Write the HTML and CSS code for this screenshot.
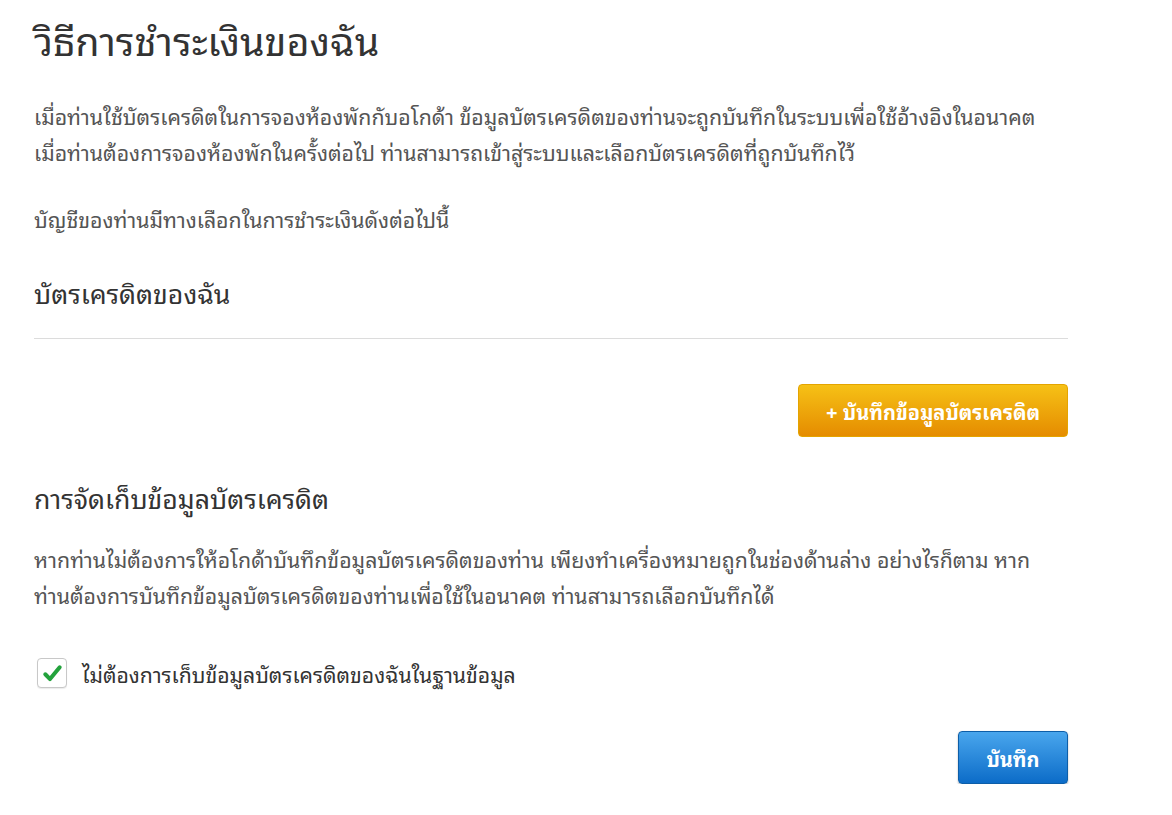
FILE: index.html
```html
<!DOCTYPE html>
<html lang="th">
<head>
<meta charset="utf-8">
<link rel="stylesheet" href="styles.css">
</head>
<body>
<div class="page">
  <h1 class="title">วิธีการชำระเงินของฉัน</h1>
  <p class="text">เมื่อท่านใช้บัตรเครดิตในการจองห้องพักกับอโกด้า ข้อมูลบัตรเครดิตของท่านจะถูกบันทึกในระบบเพื่อใช้อ้างอิงในอนาคต<br>เมื่อท่านต้องการจองห้องพักในครั้งต่อไป ท่านสามารถเข้าสู่ระบบและเลือกบัตรเครดิตที่ถูกบันทึกไว้</p>
  <p class="text options">บัญชีของท่านมีทางเลือกในการชำระเงินดังต่อไปนี้</p>
  <h2 class="subtitle">บัตรเครดิตของฉัน</h2>
  <div class="divider"></div>
  <div class="actions add">
    <button class="btn btn-orange">+ บันทึกข้อมูลบัตรเครดิต</button>
  </div>
  <h2 class="subtitle storage">การจัดเก็บข้อมูลบัตรเครดิต</h2>
  <p class="text">หากท่านไม่ต้องการให้อโกด้าบันทึกข้อมูลบัตรเครดิตของท่าน เพียงทำเครื่องหมายถูกในช่องด้านล่าง อย่างไรก็ตาม หาก<br>ท่านต้องการบันทึกข้อมูลบัตรเครดิตของท่านเพื่อใช้ในอนาคต ท่านสามารถเลือกบันทึกได้</p>
  <label class="check">
    <span class="box"><svg viewBox="0 0 24 24" width="23" height="23"><path d="M4.5 12.8l4.9 5L19.5 5.5" fill="none" stroke="#23a23c" stroke-width="4.2" stroke-linecap="round" stroke-linejoin="round"/></svg></span>
    <span class="check-label">ไม่ต้องการเก็บข้อมูลบัตรเครดิตของฉันในฐานข้อมูล</span>
  </label>
  <div class="actions save">
    <button class="btn btn-blue">บันทึก</button>
  </div>
</div>
</body>
</html>
```
FILE: styles.css
```css
html, body { margin: 0; padding: 0; background: #fff; }
body { font-family: "Noto Sans Thai Looped", "Noto Sans", sans-serif; color: #333; }
.page { width: 1034px; padding: 0 0 0 34px; }
.title { font-size: 39.5px; font-weight: normal; margin: 0; padding-top: 19px; line-height: 40px; color: #333; }
.text { font-size: 21.3px; color: #555; line-height: 36px; margin: 0; }
.title + .text { margin-top: 38px; }
.options { margin-top: 31px; }
.subtitle { font-size: 26.6px; font-weight: normal; color: #333; margin: 0; margin-top: 41px; line-height: 30px; }
.divider { height: 1px; background: #dcdcdc; margin-top: 31px; }
.actions { display: flex; justify-content: flex-end; }
.add { margin-top: 45px; }
.btn { border: 0; border-radius: 4px; color: #fff; font-family: inherit; font-size: 20px; font-weight: bold; height: 53px; padding: 0; line-height: 1; }
.btn-orange { background: linear-gradient(#f6c116, #e58c00); border: 1px solid #e4a400; width: 270px; }
.btn-blue { background: linear-gradient(#49a6ed, #0c6cc8); border: 1px solid #0d5ea8; width: 110px; box-shadow: 0 1px 2px rgba(0,0,0,0.3); }
.storage { margin-top: 45px; }
.storage + .text { margin-top: 28px; }
.check { display: flex; align-items: center; gap: 15px; margin-top: 45px; margin-left: 3px; }
.box { width: 28px; height: 28px; border: 1px solid #c8c8c8; border-radius: 4px; display: flex; align-items: center; justify-content: center; background: #fff; box-shadow: 0 1px 1px rgba(0,0,0,0.08); }
.check-label { font-size: 21.2px; color: #333; line-height: 32px; }
.save { margin-top: 42px; }
```
